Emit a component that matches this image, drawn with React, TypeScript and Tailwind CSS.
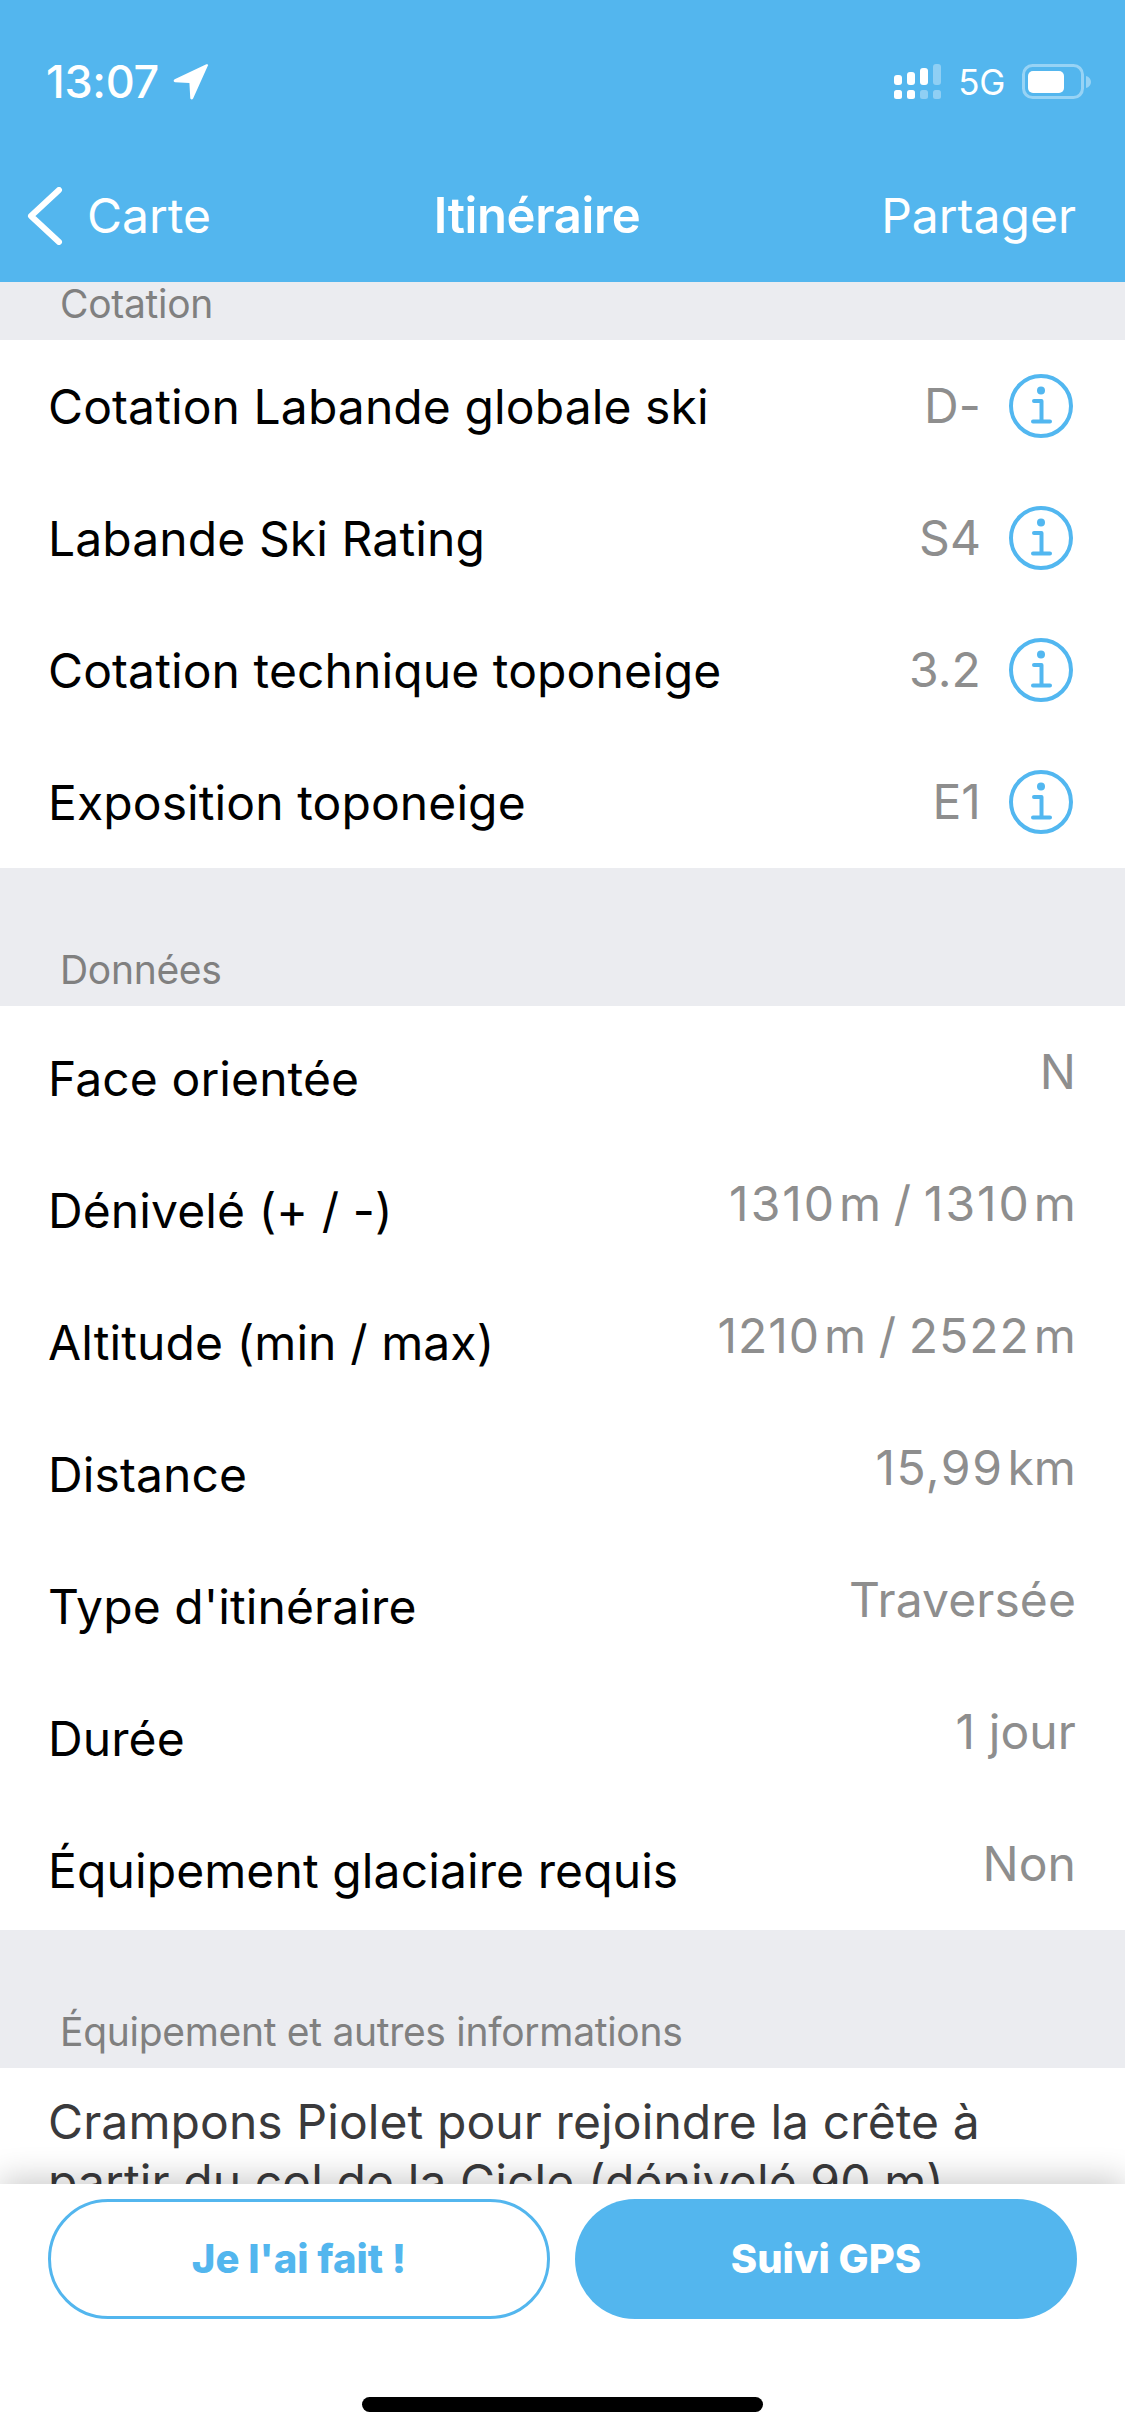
import React from 'react';

const fontStack = "font-['Inter','Liberation_Sans',sans-serif]";

interface RatingRow {
  label: string;
  value: string;
}

interface DataRow {
  label: string;
  value: React.ReactNode;
}

const ratings: RatingRow[] = [
  { label: 'Cotation Labande globale ski', value: 'D-' },
  { label: 'Labande Ski Rating', value: 'S4' },
  { label: 'Cotation technique toponeige', value: '3.2' },
  { label: 'Exposition toponeige', value: 'E1' },
];

const dataRows: DataRow[] = [
  { label: 'Face orientée', value: 'N' },
  {
    label: 'Dénivelé (+ / -)',
    value: <><span className="tracking-[2px]">1310</span><span className="ml-[3px]">m</span><span className="mx-[-1px]"> / </span><span className="tracking-[2px]">1310</span><span className="ml-[3px]">m</span></>,
  },
  {
    label: 'Altitude (min / max)',
    value: <><span className="tracking-[1px]">1210</span><span className="ml-[4px]">m</span><span className="mx-[-1px]"> / </span><span className="tracking-[1px]">2522</span><span className="ml-[4px]">m</span></>,
  },
  { label: 'Distance', value: <><span className="tracking-[1.5px]">15,99</span><span className="ml-[4px]">km</span></> },
  { label: "Type d'itinéraire", value: 'Traversée' },
  { label: 'Durée', value: '1 jour' },
  { label: 'Équipement glaciaire requis', value: 'Non' },
];

function InfoIcon() {
  return (
    <svg width="66" height="66" viewBox="0 0 66 66" fill="none" className="shrink-0">
      <circle cx="33" cy="33" r="30" stroke="#52b7f0" strokeWidth="4" />
      <circle cx="33" cy="17.5" r="4" fill="#52b7f0" />
      <path d="M26 28h7.5v20M25 48.500h17" stroke="#52b7f0" strokeWidth="4" strokeLinecap="round" strokeLinejoin="round" />
    </svg>
  );
}

function SectionLabel({ children, className }: { children: React.ReactNode; className: string }) {
  return (
    <div className={`flex items-end px-[60px] pb-[13px] bg-[#ebecf0] text-[39px] leading-[46px] text-[#808080] tracking-[-0.3px] ${className}`}>
      {children}
    </div>
  );
}

function StatusBar() {
  return (
    <div className="h-[132px] flex items-start justify-between pl-[46px] pr-[33px] pt-[57px]">
      <div className="flex items-center">
        <span className="text-[45px] leading-[50px] font-medium tracking-[-0.3px] text-white">13:07</span>
        <svg width="36" height="36" viewBox="0 0 34 34" className="ml-[14px]">
          <path d="M33 1.500 19 32.500c-.8 1.500-2.500 1.200-2.700-.4L15.500 18 2 17.200c-1.600-.2-1.900-2-.4-2.700L31 .4c1.500-.6 2.600.4 2 1.100Z" fill="#fff" />
        </svg>
      </div>
      <div className="flex items-center pt-[7px]">
        <svg width="48" height="36" viewBox="0 0 48 36">
          <rect x="0" y="26" width="8" height="9" rx="2.500" fill="#fff" />
          <rect x="13" y="26" width="8" height="9" rx="2.500" fill="#fff" />
          <rect x="26" y="26" width="8" height="9" rx="2.500" fill="#fff" fillOpacity="0.35" />
          <rect x="39" y="26" width="8" height="9" rx="2.500" fill="#fff" fillOpacity="0.35" />
          <rect x="0" y="11" width="8" height="10" rx="3" fill="#fff" />
          <rect x="13" y="8" width="8" height="13" rx="3" fill="#fff" />
          <rect x="26" y="4" width="8" height="17" rx="3" fill="#fff" />
          <rect x="39" y="0" width="8" height="21" rx="3" fill="#fff" fillOpacity="0.35" />
        </svg>
        <span className="ml-[16px] text-[35px] leading-[36px] text-white tracking-[-0.3px]">5G</span>
        <svg width="70" height="36" viewBox="0 0 70 36" className="ml-[17px]">
          <rect x="1.500" y="1.500" width="59" height="32" rx="9" fill="none" stroke="#fff" strokeOpacity="0.4" strokeWidth="3" />
          <rect x="6" y="7" width="36" height="22" rx="5" fill="#fff" />
          <path d="M64 12c3 .8 5 3 5 6s-2 5.200-5 6Z" fill="#fff" fillOpacity="0.4" />
        </svg>
      </div>
    </div>
  );
}

function NavBar() {
  return (
    <div className="relative h-[150px] flex justify-between pl-[27px] pr-[49px] pt-[52px] text-[48px] leading-[64px] text-white">
      <div className="flex items-center h-[64px]">
        <svg width="36" height="58" viewBox="0 0 36 58" fill="none">
          <path d="M32 3 4 29l28 26" stroke="#fff" strokeWidth="6" strokeLinecap="round" strokeLinejoin="round" />
        </svg>
        <span className="ml-[24px]">Carte</span>
      </div>
      <span className="font-semibold text-[49px] tracking-[-0.4px] mr-[18px]">Itinéraire</span>
      <span>Partager</span>
    </div>
  );
}

export default function App() {
  return (
    <div className={`w-[1125px] h-[2436px] flex flex-col overflow-hidden bg-white ${fontStack}`}>
      <div className="bg-[#53b6ee] h-[282px] shrink-0">
        <StatusBar />
        <NavBar />
      </div>

      <div className="flex-1 min-h-0 overflow-hidden">
        <SectionLabel className="h-[58px]">Cotation</SectionLabel>
        {ratings.map((row) => (
          <div key={row.label} className="h-[132px] flex items-center justify-between pl-[48px] pr-[51px] text-[48px] tracking-[0.1px] text-black">
            <span className="pt-[2px]">{row.label}</span>
            <div className="flex items-center gap-[27px]">
              <span className="text-[#8e8e8e]">{row.value}</span>
              <InfoIcon />
            </div>
          </div>
        ))}

        <SectionLabel className="h-[138px]">Données</SectionLabel>
        {dataRows.map((row) => (
          <div key={row.label} className="h-[132px] flex items-center justify-between pl-[48px] pr-[49px] text-[48px] tracking-[0.1px] text-black">
            <span className="pt-[14px]">{row.label}</span>
            <span className="text-[#8e8e8e]">{row.value}</span>
          </div>
        ))}

        <SectionLabel className="h-[138px]">Équipement et autres informations</SectionLabel>
        <p className="pl-[48px] pr-[49px] pt-[24px] text-[48px] leading-[60px] tracking-[0.1px] text-[#3a3a3c]">
          Crampons Piolet pour rejoindre la crête à partir du col de la Cicle (dénivelé 90 m)
        </p>
      </div>

      <div className="relative h-[252px] shrink-0 bg-white shadow-[0_-6px_30px_rgba(0,0,0,0.2)]">
        <div className="grid grid-cols-2 gap-[25px] pl-[48px] pr-[48px] pt-[15px]">
          <button className="h-[120px] rounded-full border-[3px] border-[#53b6ee] bg-white text-[40px] font-extrabold text-[#53b6ee]">
            Je l'ai fait !
          </button>
          <button className="h-[120px] rounded-full bg-[#53b6ee] text-[40px] font-extrabold text-white">
            Suivi GPS
          </button>
        </div>
        <div className="mx-auto mt-[78px] w-[401px] h-[15px] rounded-full bg-black" />
      </div>
    </div>
  );
}
